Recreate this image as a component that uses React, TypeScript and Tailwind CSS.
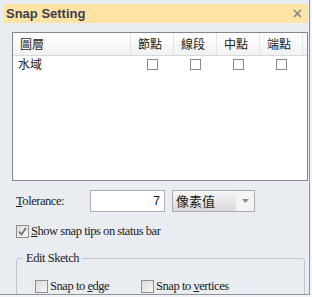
import React from 'react';

const SERIF = "font-['Liberation_Serif','Noto_Sans_CJK_TC',serif] text-[12.5px] tracking-[-0.45px] text-[#1b1b1b]";
const CJK = "font-['Noto_Sans_CJK_TC','Noto_Sans_CJK_SC',sans-serif] text-[12px] text-[#1b1b1b]";

const COLUMNS = ['節點', '線段', '中點', '端點'];

function Box({ size = 11, checked = false }: { size?: number; checked?: boolean }) {
    return (
        <span
            className="flex items-center justify-center border border-[#8e8f8f] bg-gradient-to-br from-[#dcdcdc] to-[#f6f6f6]"
            style={{ width: size, height: size }}
        >
            {checked && (
                <svg width="9" height="9" viewBox="0 0 9 9">
                    <path d="M1 4.5 L3.5 7.5 L8 1" fill="none" stroke="#6a6a6a" strokeWidth="1.6" />
                </svg>
            )}
        </span>
    );
}

function CheckLabel({ label, accessIdx, checked = false }: { label: string; accessIdx: number; checked?: boolean }) {
    return (
        <label className={`flex items-center ${SERIF}`}>
            <Box size={13} checked={checked} />
            <span className="ml-[2px] leading-[13px]">
                {label.slice(0, accessIdx)}
                <span className="underline underline-offset-1">{label[accessIdx]}</span>
                {label.slice(accessIdx + 1)}
            </span>
        </label>
    );
}

export default function App() {
    return (
        <div className="w-[312px] h-[297px] bg-[#f2f4f7] pr-[2px] pb-[2px] overflow-hidden">
            <div className="h-full bg-[#e9edf2] border-r border-b border-[#8d939b] pt-[4px] pl-[4px] pr-[1px] overflow-hidden">
                {/* title bar */}
                <div className="h-[19px] bg-[#fde4a4] flex items-center justify-between pl-[2px] pr-[6px]">
                    <span className="font-['Liberation_Sans',sans-serif] font-bold text-[13px] text-[#3c3f52] leading-none">
                        Snap Setting
                    </span>
                    <svg width="9" height="9" viewBox="0 0 9 9">
                        <path d="M1 1 L8 8 M8 1 L1 8" stroke="#7d7d7d" strokeWidth="1.5" />
                    </svg>
                </div>

                {/* layer list */}
                <div className="ml-[8px] mt-[9px] w-[296px] h-[149px] border border-[#828790] bg-white overflow-hidden">
                    <div className="flex h-[23px] border-b border-[#d5d8dc] bg-gradient-to-b from-white to-[#f1f2f4]">
                        <div className={`w-[118px] pl-[7px] flex items-center border-r border-[#e2e4e7] ${CJK}`}>圖層</div>
                        {COLUMNS.map((c) => (
                            <div key={c} className={`w-[43px] pl-[7px] flex items-center border-r border-[#e2e4e7] ${CJK}`}>
                                {c}
                            </div>
                        ))}
                    </div>
                    <div className="flex h-[16px] items-center">
                        <div className={`w-[118px] pl-[5px] ${CJK}`}>水域</div>
                        {COLUMNS.map((c) => (
                            <div key={c} className="w-[43px] flex justify-center">
                                <span className="w-[11px] h-[11px] border border-[#8a8a8a] bg-white" />
                            </div>
                        ))}
                    </div>
                </div>

                {/* tolerance */}
                <div className="flex items-center mt-[9px] ml-[12px] h-[22px]">
                    <span className={`w-[74px] ${SERIF}`}>
                        <span className="underline underline-offset-1">T</span>olerance:
                    </span>
                    <div className="w-[75px] h-[22px] border border-[#abb0b7] bg-white flex items-center justify-end pr-[4px] font-['Liberation_Sans',sans-serif] text-[12px] text-[#111]">
                        7
                    </div>
                    <div className="ml-[7px] w-[83px] h-[22px] border border-[#a9adb2] flex bg-[#f4f4f4]">
                        <div className={`flex-1 flex items-center pl-[3px] bg-gradient-to-b from-[#f6f6f6] to-[#d9d9d9] ${CJK} text-[13px]`}>
                            像素值
                        </div>
                        <div className="w-[18px] flex items-center justify-center">
                            <svg width="7" height="4" viewBox="0 0 7 4">
                                <path d="M0 0 H7 L3.5 4 Z" fill="#8a8a8a" />
                            </svg>
                        </div>
                    </div>
                </div>

                {/* status bar tips */}
                <div className="ml-[12px] mt-[13px]">
                    <CheckLabel label="Show snap tips on status bar" accessIdx={0} checked />
                </div>

                {/* edit sketch group */}
                <fieldset className="ml-[12px] mt-[11px] w-[289px] h-[60px] border border-[#bfc5cc] rounded-[3px] px-[18px]">
                    <legend className={`ml-[-12px] px-[3px] ${SERIF}`}>Edit Sketch</legend>
                    <div className="flex mt-[12px]">
                        <div className="w-[106px]">
                            <CheckLabel label="Snap to edge" accessIdx={8} />
                        </div>
                        <CheckLabel label="Snap to vertices" accessIdx={8} />
                    </div>
                </fieldset>
            </div>
        </div>
    );
}
